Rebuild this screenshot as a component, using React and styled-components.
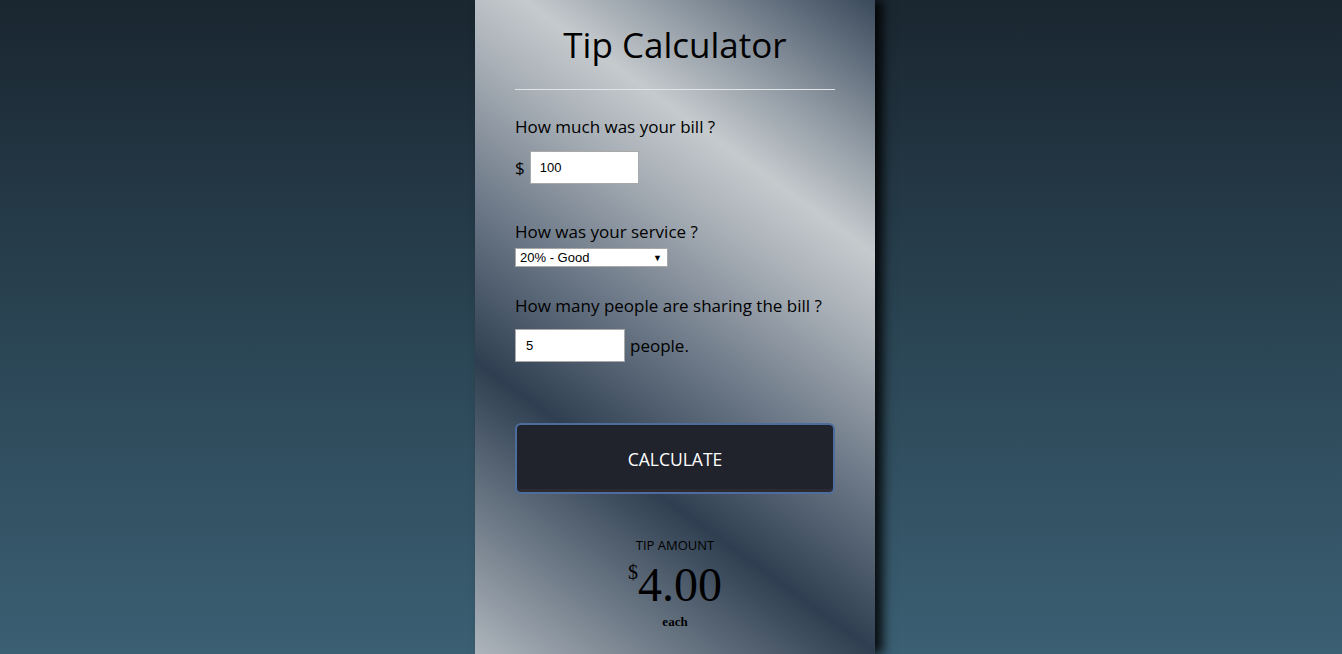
import React, { useState } from 'react';
import styled, { createGlobalStyle } from 'styled-components';

const GlobalStyle = createGlobalStyle`
  html, body {
    margin: 0;
    padding: 0;
  }
  body {
    min-height: 100vh;
    background: linear-gradient(to bottom, #1a2630 0%, #2a4453 50%, #3b5f73 100%);
    font-family: "Open Sans", "Noto Sans", sans-serif;
  }
`;

const Page = styled.div`
  display: flex;
  justify-content: center;
  min-height: 100vh;
  padding-left: 8px;
`;

const Card = styled.div`
  width: 400px;
  min-height: 654px;
  box-sizing: border-box;
  padding: 0 40px;
  display: flex;
  flex-direction: column;
  background: linear-gradient(
    36deg,
    #aeb5bc 0%,
    #6f7b88 15%,
    #2f3f51 31%,
    #6c7887 48%,
    #a9b0b7 64%,
    #c5cacd 73%,
    #8e98a2 84%,
    #3a495b 100%
  );
  box-shadow: 8px 0 10px rgba(0, 0, 0, 0.85);
`;

const Title = styled.h1`
  margin: 25px 0 0;
  font-size: 35px;
  line-height: 40px;
  font-weight: 400;
  text-align: center;
  color: #000;
`;

const Rule = styled.hr`
  margin: 24px 0 0;
  border: none;
  height: 1px;
  background: #e2e5e8;
`;

const Question = styled.p`
  margin: ${(p) => p.$top}px 0 0;
  font-size: 17px;
  line-height: 24px;
  color: #000;
`;

const Row = styled.div`
  display: flex;
  align-items: center;
  gap: ${(p) => p.$gap}px;
  margin-top: ${(p) => p.$top}px;
  font-size: 17px;
  color: #000;
`;

const TextInput = styled.input`
  display: block;
  width: ${(p) => p.$width}px;
  height: 33px;
  box-sizing: border-box;
  padding: 0 0 0 ${(p) => p.$pad}px;
  border: 1px solid #a9a9a9;
  background: #fff;
  font-family: "Liberation Sans", Arial, sans-serif;
  font-size: 13px;
  color: #000;
  outline: none;
`;

const SelectWrap = styled.div`
  position: relative;
  width: 153px;
  margin-top: 4px;
`;

const Select = styled.select`
  display: block;
  appearance: none;
  width: 153px;
  height: 19px;
  box-sizing: border-box;
  padding: 0 0 0 4px;
  border: 1px solid #a9a9a9;
  border-radius: 0;
  background: #fff;
  font-family: "Liberation Sans", Arial, sans-serif;
  font-size: 13px;
  line-height: 17px;
  color: #000;
  outline: none;
`;

const Arrow = styled.span`
  position: absolute;
  right: 6px;
  top: 4px;
  font-size: 9px;
  line-height: 11px;
  color: #000;
  pointer-events: none;
`;

const Button = styled.button`
  margin-top: 61px;
  height: 71px;
  box-sizing: border-box;
  border: 2px solid #4c6d9e;
  border-radius: 6px;
  background: #20222c;
  box-shadow: inset 0 -3px 0 #2c2a30;
  color: #fff;
  font-family: "Open Sans", "Noto Sans", sans-serif;
  font-size: 17.5px;
  cursor: pointer;
`;

const Result = styled.div`
  display: flex;
  flex-direction: column;
  align-items: center;
  margin-top: 41px;
`;

const ResultLabel = styled.div`
  font-size: 13px;
  line-height: 20px;
  color: #000;
`;

const Amount = styled.div`
  margin-top: 5px;
  font-family: "Liberation Serif", "Times New Roman", serif;
  font-size: 48px;
  line-height: 50px;
  color: #000;
`;

const Currency = styled.sup`
  font-size: 20px;
  vertical-align: 22px;
  line-height: 0;
`;

const Each = styled.div`
  margin-top: 5px;
  font-family: "Liberation Serif", "Times New Roman", serif;
  font-weight: 700;
  font-size: 13px;
  line-height: 14px;
  color: #000;
`;

const services = [
  { value: 0.3, label: '30% - Outstanding' },
  { value: 0.2, label: '20% - Good' },
  { value: 0.15, label: '15% - It was OK' },
  { value: 0.1, label: '10% - Bad' },
  { value: 0.05, label: '5% - Terrible' },
];

export default function App() {
  const [bill, setBill] = useState('100');
  const [service, setService] = useState('0.2');
  const [people, setPeople] = useState('5');
  const [tip, setTip] = useState('4.00');

  const calculate = () => {
    const total = (parseFloat(bill) || 0) * parseFloat(service);
    const n = parseInt(people, 10) || 1;
    setTip((total / n).toFixed(2));
  };

  return (
    <>
      <GlobalStyle />
      <Page>
        <Card>
          <Title>Tip Calculator</Title>
          <Rule />
          <Question $top={25}>How much was your bill ?</Question>
          <Row $gap={5} $top={12}>
            <span>$</span>
            <TextInput $width={109} $pad={9} value={bill} onChange={(e) => setBill(e.target.value)} />
          </Row>
          <Question $top={36}>How was your service ?</Question>
          <SelectWrap>
            <Select value={service} onChange={(e) => setService(e.target.value)}>
              {services.map((s) => (
                <option key={s.value} value={s.value}>{s.label}</option>
              ))}
            </Select>
            <Arrow>▼</Arrow>
          </SelectWrap>
          <Question $top={27}>How many people are sharing the bill ?</Question>
          <Row $gap={5} $top={11}>
            <TextInput $width={110} $pad={10} value={people} onChange={(e) => setPeople(e.target.value)} />
            <span>people.</span>
          </Row>
          <Button onClick={calculate}>CALCULATE</Button>
          <Result>
            <ResultLabel>TIP AMOUNT</ResultLabel>
            <Amount><Currency>$</Currency>{tip}</Amount>
            <Each>each</Each>
          </Result>
        </Card>
      </Page>
    </>
  );
}
